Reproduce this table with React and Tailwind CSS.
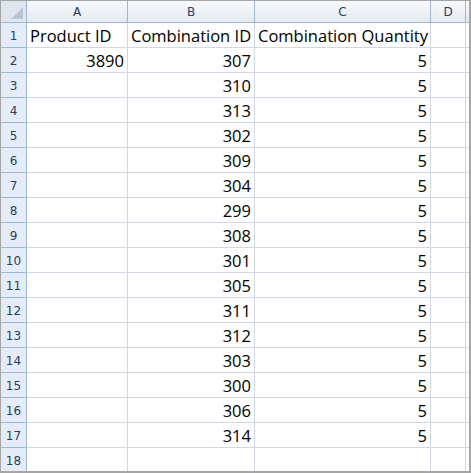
const cols = [
  { key: 'A', w: 'w-[101px]' },
  { key: 'B', w: 'w-[127px]' },
  { key: 'C', w: 'w-[176px]' },
  { key: 'D', w: 'w-[35px]' },
];

const rows = [
  ['Product ID', 'Combination ID', 'Combination Quantity'],
  ['3890', '307', '5'],
  ['', '310', '5'],
  ['', '313', '5'],
  ['', '302', '5'],
  ['', '309', '5'],
  ['', '304', '5'],
  ['', '299', '5'],
  ['', '308', '5'],
  ['', '301', '5'],
  ['', '305', '5'],
  ['', '311', '5'],
  ['', '312', '5'],
  ['', '303', '5'],
  ['', '300', '5'],
  ['', '306', '5'],
  ['', '314', '5'],
  ['', '', ''],
];

const cellFont = { fontFamily: '"Open Sans", "Liberation Sans", sans-serif' };
const headFont = { fontFamily: '"DejaVu Sans", "Liberation Sans", sans-serif' };

export default function App() {
  return (
    <div className="w-[471px] h-[473px] overflow-hidden bg-white border-l border-t border-[#a5a5a5] relative">
      {/* column headers */}
      <div className="flex h-[22px]">
        <div className="w-[26px] shrink-0 border-r border-b border-[#9eb6ce] bg-[#dfe6ef] relative">
          <div className="absolute right-[3px] bottom-[3px] w-0 h-0 border-l-[12px] border-l-transparent border-b-[12px] border-b-[#b8c4d2]" />
        </div>
        {cols.map((c) => (
          <div
            key={c.key}
            className={`${c.w} shrink-0 border-r border-b border-[#9eb6ce] bg-gradient-to-b from-[#f7f9fb] to-[#e4eaf1] flex items-center justify-center text-[12px] text-[#27415f]`}
            style={headFont}
          >
            {c.key}
          </div>
        ))}
        <div className="flex-1 border-b border-[#9eb6ce] bg-gradient-to-b from-[#f7f9fb] to-[#e4eaf1]" />
      </div>

      {rows.map((r, i) => (
        <div key={i} className="flex h-[25px]">
          <div
            className="w-[26px] shrink-0 border-r border-b border-[#9eb6ce] bg-[#e4ecf7] flex items-end justify-center pb-[3px] text-[12px] leading-[16px] text-[#27415f]"
            style={headFont}
          >
            {i + 1}
          </div>
          {cols.map((c, j) => {
            const v = r[j] ?? '';
            const left = i === 0;
            return (
              <div
                key={c.key}
                className={`${c.w} shrink-0 border-r border-b border-[#d0d7e5] flex items-end pb-0 px-[3px] text-[16.5px] leading-[22px] text-black whitespace-nowrap ${left ? 'justify-start' : 'justify-end'}`}
                style={cellFont}
              >
                {v}
              </div>
            );
          })}
          <div className="flex-1 border-b border-[#d0d7e5]" />
        </div>
      ))}
      <div className="absolute left-0 right-0 bottom-0 h-[2px] bg-[#a5a5a5]" />
      <div className="absolute top-0 bottom-0 right-0 w-[2px] bg-[#a5a5a5]" />
    </div>
  );
}
